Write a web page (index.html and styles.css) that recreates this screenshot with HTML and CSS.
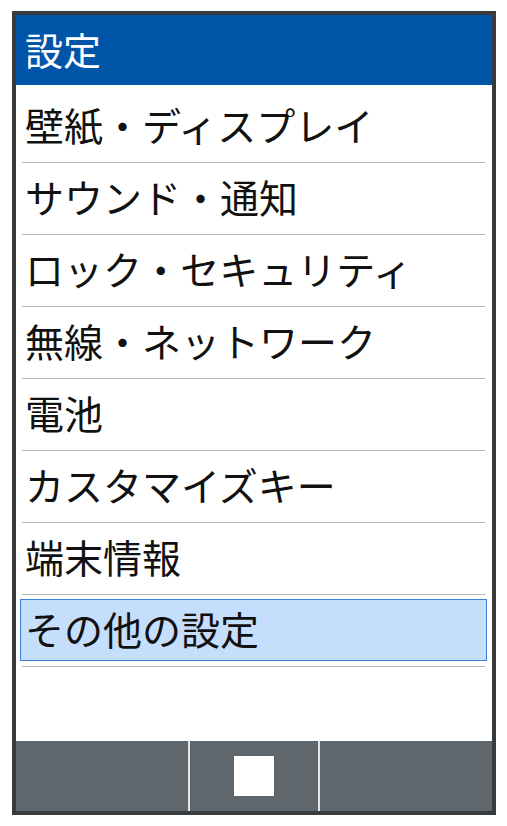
FILE: index.html
```html
<!DOCTYPE html>
<html lang="ja">
<head>
  <meta charset="UTF-8">
  <meta name="viewport" content="width=device-width, initial-scale=1.0">
  <title>設定</title>
  <link rel="stylesheet" href="styles.css">
</head>
<body>
  <div class="phone">
    <div class="header">設定</div>

    <ul class="menu">
      <li class="item">壁紙・ディスプレイ</li>
      <li class="item">サウンド・通知</li>
      <li class="item">ロック・セキュリティ</li>
      <li class="item">無線・ネットワーク</li>
      <li class="item">電池</li>
      <li class="item">カスタマイズキー</li>
      <li class="item">端末情報</li>
      <li class="item selected"><span>その他の設定</span></li>
    </ul>

    <div class="softkeys">
      <div class="key"></div>
      <div class="key center"><div class="square"></div></div>
      <div class="key"></div>
    </div>
  </div>
</body>
</html>
```

FILE: styles.css
```css
body {
  margin: 0;
  background-color: #fff;
  font-family: "Noto Sans CJK JP", "Noto Sans", sans-serif;
}
.phone {
  margin: 11px 0 0 12px;
  width: 476px;
  height: 796px;
  border: 4px solid #383a3b;
  display: flex;
  flex-direction: column;
}
.header {
  height: 70px;
  flex: none;
  background-color: #0055a9;
  color: #fff;
  font-size: 38px;
  line-height: 68px;
  padding-left: 9px;
}
.menu {
  flex: 1;
  list-style: none;
  margin: 0;
  padding: 6px 0 0 0;
}
.item {
  position: relative;
  height: 72px;
  line-height: 67px;
  font-size: 39px;
  color: #111;
  padding-left: 9px;
  box-sizing: border-box;
}
.item::after {
  content: "";
  position: absolute;
  left: 6px;
  right: 7px;
  bottom: 0;
  height: 1px;
  background-color: #b3bbb7;
}
.item.selected {
  padding: 4px 5px 5px 4px;
}
.item.selected span {
  display: block;
  height: 62px;
  line-height: 57px;
  padding-left: 4px;
  background-color: #c4defb;
  border: 1px solid #3a80d8;
  box-sizing: border-box;
}
.softkeys {
  height: 70px;
  flex: none;
  display: flex;
  gap: 2px;
  background-color: #e2e4e5;
}
.key {
  width: 172px;
  background-color: #5f676d;
  display: flex;
  align-items: center;
  justify-content: center;
}
.key.center {
  width: 128px;
}
.square {
  width: 40px;
  height: 40px;
  background-color: #fff;
}
```
